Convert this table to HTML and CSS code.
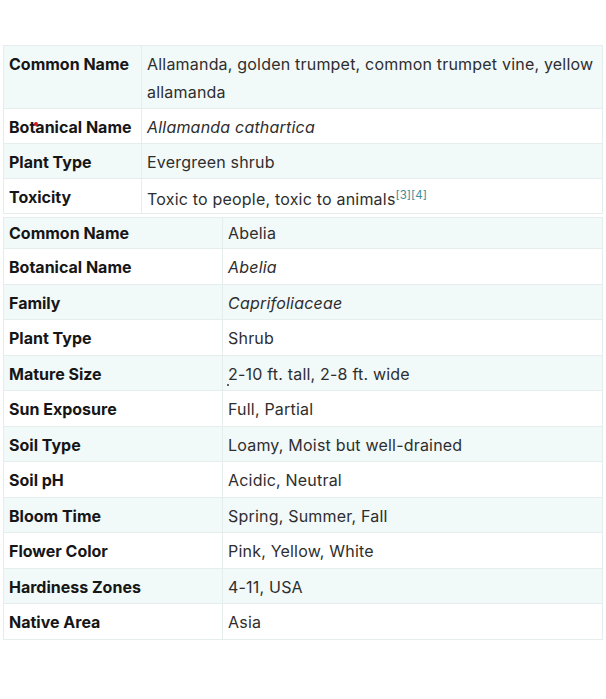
FILE: index.html
```html
<!DOCTYPE html>
<html>
<head>
<meta charset="utf-8">
<link rel="stylesheet" href="styles.css">
</head>
<body>
<div class="page">
  <table class="specs specs-a">
    <tr class="alt"><th>Common Name</th><td>Allamanda, golden trumpet, common trumpet vine, yellow allamanda</td></tr>
    <tr><th><span class="mark-wrap">Botanical Name<span class="mark mark-red"></span></span></th><td><em>Allamanda cathartica</em></td></tr>
    <tr class="alt"><th>Plant Type</th><td>Evergreen shrub</td></tr>
    <tr><th>Toxicity</th><td class="tox">Toxic to people, toxic to animals<sup class="ref">[3][4]</sup></td></tr>
  </table>
  <table class="specs specs-b">
    <tr class="alt first"><th>Common Name</th><td>Abelia</td></tr>
    <tr><th>Botanical Name</th><td><em>Abelia</em></td></tr>
    <tr class="alt"><th>Family</th><td><em>Caprifoliaceae</em></td></tr>
    <tr><th>Plant Type</th><td>Shrub</td></tr>
    <tr class="alt"><th>Mature Size</th><td><span class="mark-wrap">2-10 ft. tall, 2-8 ft. wide<span class="mark mark-dark"></span></span></td></tr>
    <tr><th>Sun Exposure</th><td>Full, Partial</td></tr>
    <tr class="alt"><th>Soil Type</th><td>Loamy, Moist but well-drained</td></tr>
    <tr><th>Soil pH</th><td>Acidic, Neutral</td></tr>
    <tr class="alt"><th>Bloom Time</th><td>Spring, Summer, Fall</td></tr>
    <tr><th>Flower Color</th><td>Pink, Yellow, White</td></tr>
    <tr class="alt"><th>Hardiness Zones</th><td>4-11, USA</td></tr>
    <tr><th>Native Area</th><td>Asia</td></tr>
  </table>
</div>
</body>
</html>
```
FILE: styles.css
```css
html, body {
  margin: 0;
  padding: 0;
  background: #ffffff;
}
.page {
  padding: 45px 3px 0 3px;
  width: 600px;
  font-family: Inter, "Open Sans", sans-serif;
  font-size: 16px;
  color: #222222;
}
.specs {
  width: 600px;
  border-collapse: collapse;
  table-layout: fixed;
}
.specs th,
.specs td {
  border: 1px solid #e6eded;
  padding: 4px 5px 2px 5px;
  line-height: 28px;
  text-align: left;
  vertical-align: top;
}
.specs th {
  font-weight: 700;
  color: #161616;
}
.specs td {
  font-weight: 400;
  color: #2e2e2e;
  letter-spacing: 0.2px;
}
.specs-a th { width: 127px; }
.specs-b th { width: 208px; }
.specs-a { margin-bottom: 3px; }
.specs-b th,
.specs-b td {
  line-height: 28.5px;
}
.specs-b tr.first th,
.specs-b tr.first td {
  padding-top: 1px;
  padding-bottom: 1px;
  line-height: 28px;
}
.specs tr.alt { background: #f1f9f9; }
.specs td.tox {
  padding-top: 6px;
  padding-bottom: 0;
}
.ref {
  color: #3b8c96;
  font-size: 11.5px;
  line-height: 0;
  letter-spacing: 0;
}
.mark-wrap {
  position: relative;
}
.mark {
  position: absolute;
  border-radius: 50%;
}
.mark-red {
  left: 25px;
  top: 5px;
  width: 4px;
  height: 4px;
  background: #e0141a;
}
.mark-dark {
  left: -1px;
  top: 20px;
  width: 2px;
  height: 2px;
  background: #333333;
}
```
